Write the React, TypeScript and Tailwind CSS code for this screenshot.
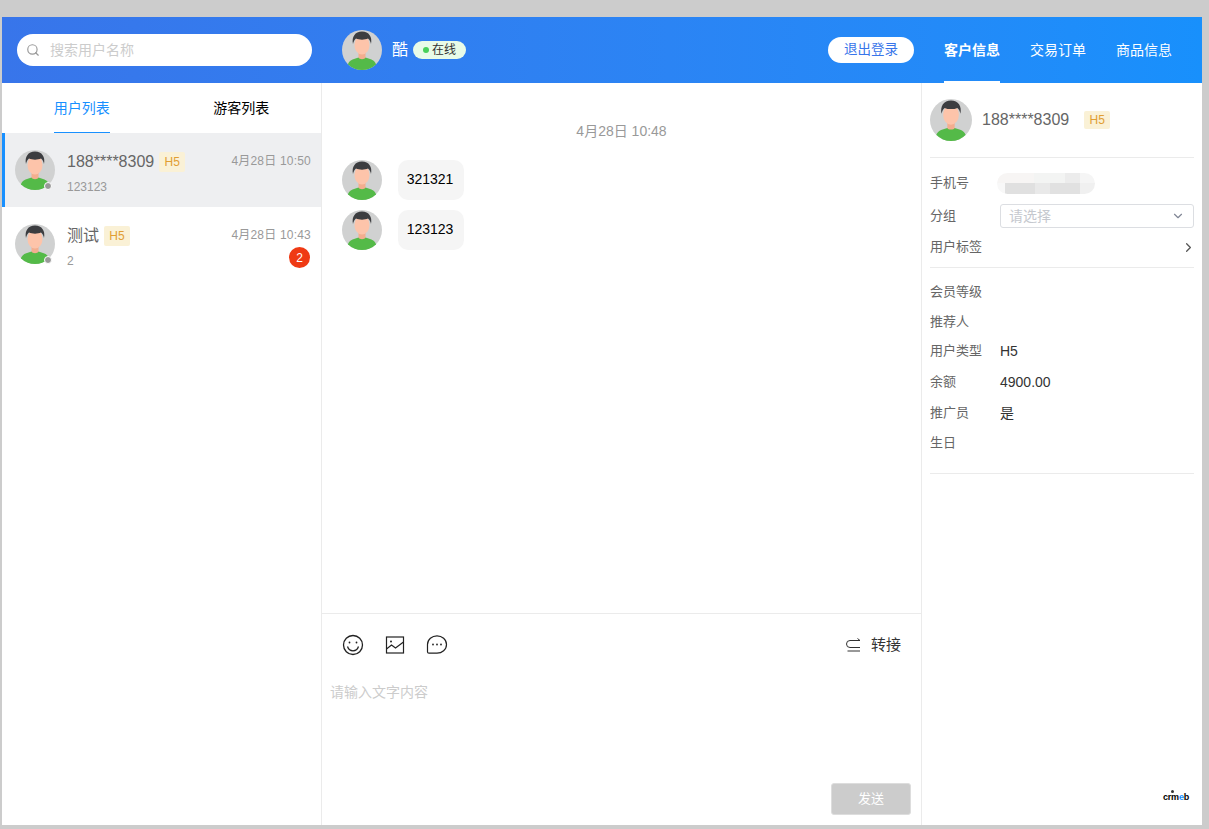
import { ChevronDown, ChevronRight, Search } from "lucide-react";

function Avatar({ size = "w-10 h-10" }: { size?: string }) {
  return (
    <svg viewBox="0 0 40 40" className={`${size} shrink-0 block`}>
      <defs>
        <clipPath id="avatar-clip">
          <circle cx="20" cy="20" r="20" />
        </clipPath>
      </defs>
      <g clipPath="url(#avatar-clip)">
        <rect width="40" height="40" fill="#d0d1d1" />
        <path d="M5 40C5 33 8 30 12 29l4.500-1.500h7L28 29c4 1 7 4 7 11z" fill="#54ba48" />
        <path d="M16.500 22h7v5.500c-.8 2.200-6.200 2.200-7 0z" fill="#f3ae8f" />
        <ellipse cx="20" cy="15" rx="7.500" ry="9.500" fill="#fdc4aa" />
        <path d="M11 14C9.500 7 13 1.500 20 1.500S30.500 7 29 14c-.5-2.500-1.500-4.500-3-5.500-3 1.500-9 1.500-12 0-1.500 1-2.500 3-3 5.500z" fill="#3c3d40" />
      </g>
    </svg>
  );
}

function Tag({ className = "" }: { className?: string }) {
  return (
    <span className={`flex items-center justify-center w-[26px] bg-[#faf1d6] rounded-[2px] text-[12px] text-[#e19e33] ${className}`}>
      H5
    </span>
  );
}

function UserRow({ name, time, preview, unread, active }: { name: string; time: string; preview: string; unread?: number; active?: boolean }) {
  return (
    <div className={`flex items-start h-[74px] pr-[10px] ${active ? "bg-[#eeeff1] border-l-[3px] border-[#1890ff] pl-[10px]" : "pl-[13px]"}`}>
      <div className="relative mt-[17px] mr-3">
        <Avatar />
        <span className="absolute right-[3px] bottom-0 w-[6px] h-[6px] rounded-full bg-[#999] border border-white box-content" />
      </div>
      <div className="flex-1 min-w-0 pt-[19px]">
        <div className="flex items-center justify-between h-5">
          <div className="flex items-center gap-[5px]">
            <span className="text-base text-[#666]">{name}</span>
            <Tag className="h-5" />
          </div>
          <span className="-mt-[2px] text-xs tracking-[0.2px] text-[#999]">{time}</span>
        </div>
        <div className="flex items-center justify-between h-[21px] mt-[4px]">
          <span className="text-xs text-[#999]">{preview}</span>
          {unread ? (
            <span className="flex items-center justify-center w-[21px] h-[21px] -mt-[6px] mr-px rounded-full bg-[#ef3a14] text-xs text-white">{unread}</span>
          ) : null}
        </div>
      </div>
    </div>
  );
}

function Message({ text }: { text: string }) {
  return (
    <div className="flex">
      <Avatar />
      <div className="flex items-center justify-center w-[66px] h-10 ml-4 pr-[2px] pb-[2px] rounded-[10px] bg-[#f5f5f5] text-sm text-black">{text}</div>
    </div>
  );
}

function InfoRow({ label, value, className = "" }: { label: string; value?: string; className?: string }) {
  return (
    <div className={`flex items-center ${className}`}>
      <span className="w-[70px] text-[13px] text-[#666]">{label}</span>
      {value ? <span className="text-sm text-[#333]">{value}</span> : null}
    </div>
  );
}

function BlurredPhone() {
  return (
    <div className="w-[98px] h-[21px] rounded-full overflow-hidden">
      <div className="flex h-[10px]">
        <div className="w-[37px] bg-[#f7f5f4]" />
        <div className="w-[31px] bg-[#f3f4f3]" />
        <div className="w-[15px] bg-[#ececec]" />
        <div className="w-[15px] bg-[#f5f5f5]" />
      </div>
      <div className="flex h-[11px]">
        <div className="w-[8px] bg-[#f8f8f8]" />
        <div className="w-[30px] bg-[#e0e0e0]" />
        <div className="w-[15px] bg-[#e9e9e9]" />
        <div className="w-[30px] bg-[#e1e1e1]" />
        <div className="w-[15px] bg-[#f0f0f0]" />
      </div>
    </div>
  );
}

export default function App() {
  return (
    <div className="h-[829px] bg-[#cccccc] pt-[17px] pb-[4px] pl-[2px] pr-[7px] overflow-hidden font-['Liberation_Sans','Noto_Sans_CJK_SC',sans-serif]">
      <div className="flex flex-col h-full bg-white">
        <header className="flex items-center h-[66px] shrink-0 bg-gradient-to-r from-[#3875ea] to-[#1890fc]">
          <div className="w-[320px] shrink-0 pl-[15px] pr-[10px]">
            <div className="flex items-center h-8 px-[9px] rounded-full bg-white">
              <Search className="w-[14px] h-[14px] text-[#999]" strokeWidth={2} />
              <span className="ml-[10px] text-sm text-[#ccc]">搜索用户名称</span>
            </div>
          </div>
          <div className="flex items-center pl-5 flex-1">
            <Avatar />
            <span className="ml-[10px] text-base text-white">酷</span>
            <span className="flex items-center justify-center w-[53px] h-[18px] ml-[5px] rounded-full bg-[#e8fbe8] text-xs text-[#333]">
              <span className="w-[6px] h-[6px] mr-[3px] rounded-full bg-[#48d15a]" />
              在线
            </span>
          </div>
          <button className="w-[86px] h-[26px] mr-[30px] rounded-full bg-white text-[13.500px] text-[#3875ea]">退出登录</button>
          <nav className="flex self-stretch gap-[30px] pr-[30px]">
            <span className="flex items-center h-full pt-[2px] border-b-[2px] border-white text-sm font-bold text-white">客户信息</span>
            <span className="flex items-center h-full pt-[2px] border-b-[2px] border-transparent text-sm text-white">交易订单</span>
            <span className="flex items-center h-full pt-[2px] border-b-[2px] border-transparent text-sm text-white">商品信息</span>
          </nav>
        </header>

        <div className="flex flex-1 min-h-0">
          <aside className="w-[320px] shrink-0 border-r border-[#ebebeb]">
            <div className="grid grid-cols-2 h-[50px]">
              <div className="flex justify-center">
                <span className="flex items-center h-full border-b border-[#1890ff] text-sm text-[#1890ff]">用户列表</span>
              </div>
              <div className="flex justify-center">
                <span className="flex items-center h-full text-sm text-black">游客列表</span>
              </div>
            </div>
            <UserRow active name="188****8309" time="4月28日 10:50" preview="123123" />
            <UserRow name="测试" time="4月28日 10:43" preview="2" unread={2} />
          </aside>

          <main className="flex flex-col w-[599px] shrink-0">
            <div className="flex-1 px-5 pt-[38px]">
              <div className="text-center text-sm leading-5 text-[#999]">4月28日 10:48</div>
              <div className="flex flex-col gap-[10px] mt-[19px]">
                <Message text="321321" />
                <Message text="123123" />
              </div>
            </div>
            <div className="h-[212px] shrink-0 border-t border-[#ebebeb]">
              <div className="flex items-center justify-between h-[62px] pl-[20px] pr-5">
                <div className="flex items-center gap-5">
                  <svg viewBox="0 0 22 22" className="w-[22px] h-[22px]" fill="none" stroke="#222" strokeWidth="1.300">
                    <circle cx="11" cy="11" r="9.500" />
                    <circle cx="7.500" cy="8.500" r=".9" fill="#222" stroke="none" />
                    <circle cx="14.500" cy="8.500" r=".9" fill="#222" stroke="none" />
                    <path d="M5.500 12.500c1 3 3 4.300 5.500 4.300s4.500-1.300 5.500-4.300" />
                  </svg>
                  <svg viewBox="0 0 22 22" className="w-[22px] h-[22px]" fill="none" stroke="#222" strokeWidth="1.200">
                    <rect x="2.500" y="3" width="17" height="16" />
                    <path d="M2.500 15l5-4 4 3 8-6" />
                    <circle cx="7" cy="7.500" r="1" fill="#222" stroke="none" />
                  </svg>
                  <svg viewBox="0 0 22 22" className="w-[22px] h-[22px]" fill="none" stroke="#222" strokeWidth="1.200">
                    <path d="M11 1.800c5 0 9.500 3.500 9.500 8.700s-4.500 8.700-9.500 8.700H3c-1 0-1.500-.6-1.500-1.500V10.500c0-5.200 4.500-8.700 9.500-8.700z" />
                    <circle cx="7" cy="10.500" r=".9" fill="#222" stroke="none" />
                    <circle cx="11" cy="10.500" r=".9" fill="#222" stroke="none" />
                    <circle cx="15" cy="10.500" r=".9" fill="#222" stroke="none" />
                  </svg>
                </div>
                <div className="flex items-center gap-[11px] text-[15px] text-[#333]">
                  <svg viewBox="0 0 14 14" className="w-[14px] h-[14px]" fill="none" stroke="#333" strokeWidth="1">
                    <path d="M14 2.500H4a3.500 3.500 0 0 0 0 7h10M11.500.5L14 2.500M1.500 13H14" />
                  </svg>
                  转接
                </div>
              </div>
              <div className="pl-[8px] pt-[6px] text-sm text-[#ccc]">请输入文字内容</div>
              <div className="flex justify-end pr-[10px] mt-[81px]">
                <button className="w-20 h-8 rounded-[3px] border border-[#ddd] bg-[#ccc] text-[13px] text-white">发送</button>
              </div>
            </div>
          </main>

          <aside className="relative flex-1 border-l border-[#ebebeb] px-2">
            <div className="flex items-center h-[75px] border-b border-[#ebebeb]">
              <Avatar size="w-[42px] h-[42px]" />
              <span className="ml-[10px] text-base text-[#666]">188****8309</span>
              <Tag className="ml-[15px] h-[18px]" />
            </div>
            <div className="border-b border-[#ebebeb] h-[110px] pt-[12px]">
              <div className="flex items-center h-[26px]">
                <span className="w-[67px] text-[13px] text-[#666]">手机号</span>
                <BlurredPhone />
              </div>
              <div className="flex items-center h-[24px] mt-[8px]">
                <span className="w-[70px] shrink-0 text-[13px] text-[#666]">分组</span>
                <div className="flex items-center justify-between flex-1 h-full pl-2 pr-2 rounded-[3px] border border-[#dcdee2] text-sm text-[#c5c8ce]">
                  请选择
                  <ChevronDown className="w-[14px] h-[14px] text-[#808695]" />
                </div>
              </div>
              <div className="flex items-center justify-between h-5 mt-[9px] text-[13px] text-[#666]">
                用户标签
                <ChevronRight className="w-[15px] h-[15px] text-[#555] -mr-[2px]" />
              </div>
            </div>
            <div className="flex flex-col pt-[9px] pb-[15px] border-b border-[#ebebeb]">
              <InfoRow label="会员等级" className="h-[30px]" />
              <InfoRow label="推荐人" className="h-[29px]" />
              <InfoRow label="用户类型" value="H5" className="h-[30px]" />
              <InfoRow label="余额" value="4900.00" className="h-[31px]" />
              <InfoRow label="推广员" value="是" className="h-[31px]" />
              <InfoRow label="生日" className="h-[30px]" />
            </div>
            <div className="absolute right-[13px] bottom-[23px] text-[9px] leading-none font-bold tracking-[-0.2px] text-black">
              <span className="absolute left-[8px] -top-[3px] w-[3px] h-[3px] rounded-full bg-[#333]" />
              crm<span className="text-[#1890ff]">e</span>b
            </div>
          </aside>
        </div>
      </div>
    </div>
  );
}
